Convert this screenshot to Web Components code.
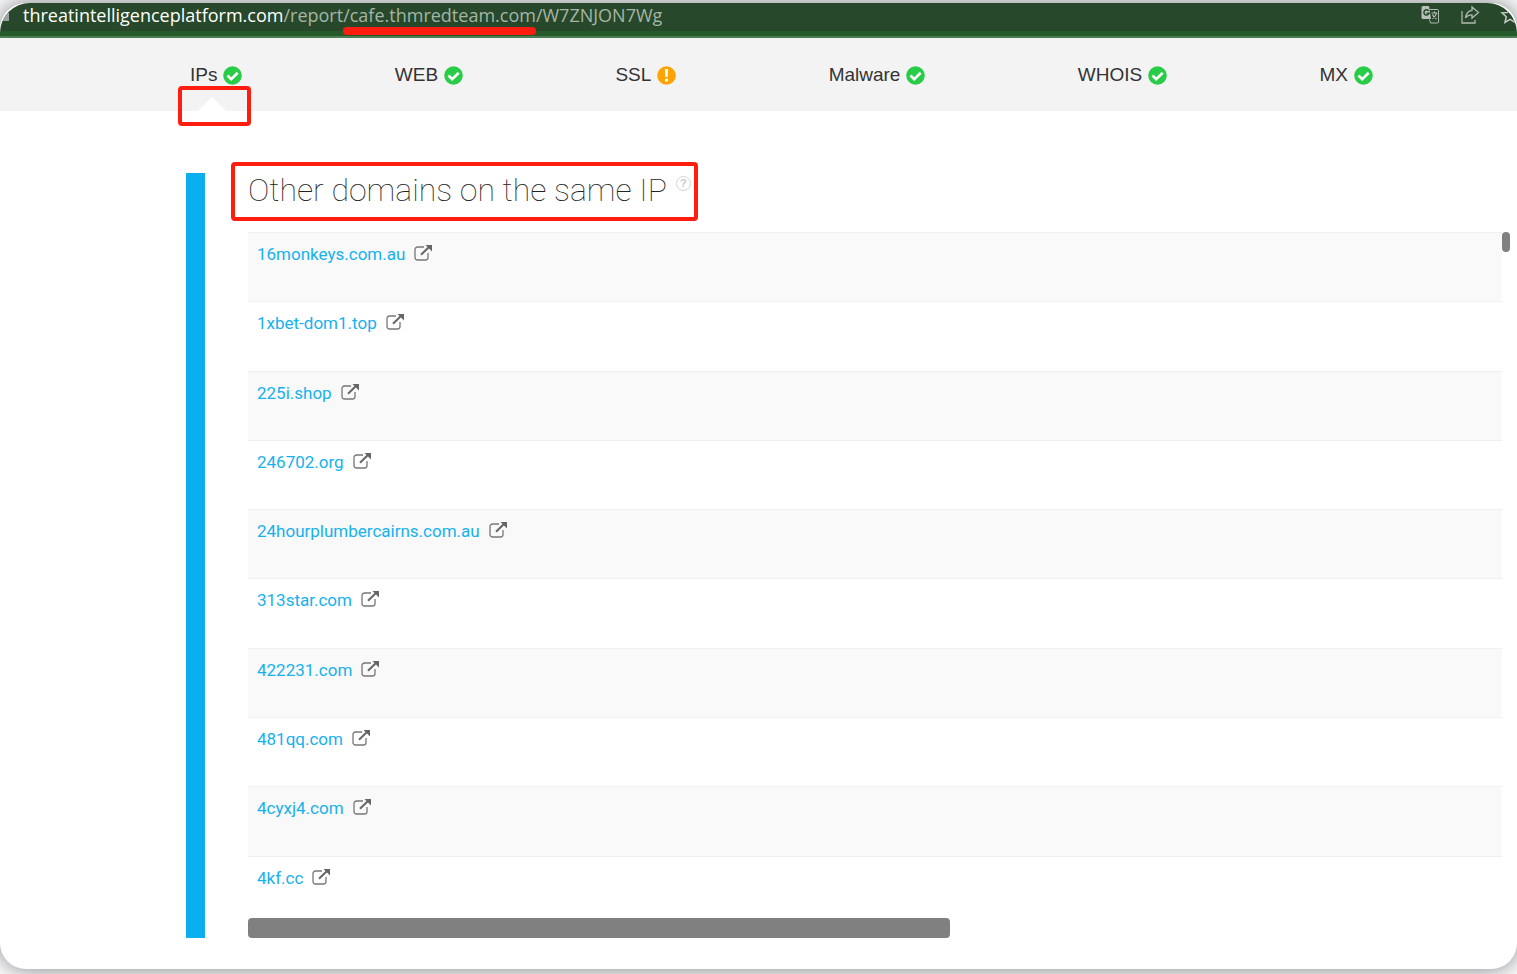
<!DOCTYPE html>
<html lang="en">
<head>
<meta charset="utf-8">
<meta name="viewport" content="width=device-width, initial-scale=1">
<title>Threat Intelligence Platform report</title>
<style>
html { background: #fff; }
body { margin: 0; font-family: "Liberation Sans", Arial, sans-serif; --mark: #ff1d10; overflow: hidden; }
</style>
</head>
<body>
<browser-card>
  <address-bar slot="bar"></address-bar>
  <report-tabs slot="tabs">
    <report-tab status="ok" active>IPs</report-tab>
    <report-tab status="ok">WEB</report-tab>
    <report-tab status="warn">SSL</report-tab>
    <report-tab status="ok">Malware</report-tab>
    <report-tab status="ok">WHOIS</report-tab>
    <report-tab status="ok">MX</report-tab>
  </report-tabs>
  <report-section>
    <section-title slot="title">Other domains on the same IP</section-title>
    <domain-list domains="16monkeys.com.au 1xbet-dom1.top 225i.shop 246702.org 24hourplumbercairns.com.au 313star.com 422231.com 481qq.com 4cyxj4.com 4kf.cc"></domain-list>
  </report-section>
</browser-card>

<script>
const define = (name, html, setup) => customElements.define(name, class extends HTMLElement {
  constructor() {
    super();
    const t = document.createElement('template');
    t.innerHTML = html;
    this.attachShadow({ mode: 'open' }).append(t.content.cloneNode(true));
  }
  connectedCallback() { if (setup) setup(this, this.shadowRoot); }
});

define('browser-card', `
<style>
:host { display: block; padding: 3px 0 5px; }
.card { background: #fff; border-radius: 26px; overflow: hidden; box-shadow: 0 0 24px #777b7d; }
</style>
<div class="card"><slot name="bar"></slot><slot name="tabs"></slot><main><slot></slot></main></div>`);

define('address-bar', `
<style>
:host { display: block; background: #27482a; border-bottom: 2px solid #4f7d53; border-radius: 30px 30px 0 0; overflow: hidden; }
.row { display: flex; align-items: center; height: 28px; padding-bottom: 5px; background: linear-gradient(#27482a 28px, #275a2a 28px); }
.lock { width: 9px; height: 8px; background: #9da3a5; flex: none; }
.url { flex: 1; margin-left: 14px; white-space: nowrap; font: 18px/24px "Open Sans", "Noto Sans", sans-serif; color: #a5b5a7; padding-bottom: 4px; }
b { font-weight: 400; color: #fff; }
.marked { position: relative; }
.marked::after { content: ""; position: absolute; left: 0; right: 0; bottom: -8px; height: 8px; border-radius: 4px; background: var(--mark); }
button { border: 0; padding: 0; margin: 0 0 4px 20px; width: 20px; height: 20px; background: none; flex: none; }
button:last-child { margin-right: -3px; }
svg { display: block; width: 20px; height: 20px; }
</style>
<div class="row">
  <span class="lock"></span>
  <div class="url"><b>threatintelligenceplatform.com</b>/report<span class="marked">/cafe.thmredteam.com</span>/W7ZNJON7Wg</div>
  <button type="button" aria-label="Translate"><svg viewBox="0 0 20 20"><path d="M2 1h7l2 13H3a1.500 1.500 0 0 1-1.500-1.500v-10A1.500 1.500 0 0 1 3 1z" fill="#b9c0ba"/><path d="M9.500 4.500h8a1 1 0 0 1 1 1V17a1 1 0 0 1-1 1H10.500L9.500 14.500" fill="none" stroke="#aeb8af"/><path d="M8.600 5.900A2.600 2.600 0 1 0 9 8.200H6.600" fill="none" stroke="#27482a" stroke-width="1.500"/><path d="M11.500 8h6M14.500 6.500V8M16.500 8c-.6 3-2.500 4.700-4 5.700M12.500 9.500c.8 2 2.300 3.500 4 4.500" fill="none" stroke="#b9c0ba" stroke-width="1.200"/></svg></button>
  <button type="button" aria-label="Share"><svg viewBox="0 0 20 20" fill="none" stroke="#aeb8af" stroke-width="1.300"><path d="M2 6v12h13v-3"/><path d="M12 2l6.500 5.500L12 13V9.800c-3 0-5 .9-6.500 3.200C6 8.500 8.500 5.800 12 5.300z"/></svg></button>
  <button type="button" aria-label="Bookmark"><svg viewBox="0 0 20 20" fill="none" stroke="#c4cac5" stroke-width="1.500"><path d="M10 2l2.300 5.400 5.700.5-4.300 3.800 1.300 5.700-5-3-5 3 1.300-5.700L2 7.900l5.700-.5z"/></svg></button>
</div>`);

define('report-tabs', `
<style>
:host { display: block; background: #f3f3f3; }
nav { display: flex; justify-content: space-between; padding: 0 144px 0 190px; }
</style>
<nav aria-label="Report sections"><slot></slot></nav>`);

define('report-tab', `
<style>
:host { display: block; position: relative; height: 73px; }
a { display: flex; align-items: center; gap: 6px; padding-top: 26px; font-size: 19px; line-height: 22px; color: #333; text-decoration: none; }
svg { width: 19px; height: 19px; display: block; }
.warn, :host([status="warn"]) .ok { display: none; }
:host([status="warn"]) .warn { display: block; }
.arrow, .mark { display: none; }
:host([active]) .arrow { display: block; position: absolute; left: 8px; bottom: 0; border: 14px solid transparent; border-top: 0; border-bottom-color: #fff; }
:host([active]) .mark { display: block; position: absolute; box-sizing: border-box; left: -12px; right: -9px; top: 48px; height: 40px; border: 4px solid var(--mark); border-radius: 4px; }
</style>
<a href="#"><span><slot></slot></span>
<svg class="ok" viewBox="0 0 19 19"><circle cx="9.500" cy="9.500" r="9.300" fill="#29cc47"/><path d="M4.500 9.500l3.700 3.600 6.500-6.400" fill="none" stroke="#fff" stroke-width="2.700"/></svg>
<svg class="warn" viewBox="0 0 19 19"><circle cx="9.500" cy="9.500" r="9.300" fill="#ffa305"/><path d="M7.900 3h3.200l-.4 8H8.300zM8 12.700h3v2.900H8z" fill="#fff"/></svg></a>
<span class="arrow"></span><span class="mark"></span>`);

define('report-section', `
<style>
:host { display: block; padding: 62px 7px 31px 186px; }
section { border-left: 19px solid #0baeee; padding-left: 43px; }
</style>
<section><slot name="title"></slot><slot></slot></section>`);

define('section-title', `
<style>
:host { display: block; height: 59px; }
.box { display: inline-flex; position: relative; gap: 9px; }
h2 { margin: 0; font: 100 32px/34px Roboto, sans-serif; color: #222; white-space: nowrap; }
button { width: 15px; height: 15px; margin-top: 3px; padding: 0; box-sizing: border-box; border: 1px solid #d4d4d4; border-radius: 50%; background: none; color: #c8c8c8; font: 700 11px/13px "Liberation Sans", sans-serif; }
.mark { position: absolute; left: -17px; right: -7px; top: -11px; bottom: -14px; border: 4px solid var(--mark); border-radius: 4px; box-sizing: border-box; pointer-events: none; }
</style>
<div class="box"><h2><slot></slot></h2><button type="button" aria-label="Help">?</button><span class="mark"></span></div>`);

define('domain-list', `
<style>
:host { display: grid; grid-template-columns: 1fr 8px; }
.view { height: 686px; overflow: hidden; }
table { width: 100%; height: 693px; border-collapse: separate; border-spacing: 0; }
td { padding: 11px 9px 0; vertical-align: top; border-top: 1px solid #f0f0f0; font: 17px/20px Roboto, sans-serif; }
tr:nth-child(odd) td { background: #f9f9f9; }
a { color: #16b1ee; text-decoration: none; }
a.out { display: inline-block; margin-left: 9px; vertical-align: top; }
svg { display: block; width: 18px; height: 18px; }
.v { height: 20px; border-radius: 4px; background: #808080; }
.h { width: 56%; height: 20px; border-radius: 4px; background: #808080; }
</style>
<div class="view"><table aria-label="Domains on the same IP"><tbody></tbody></table></div>
<div class="v"></div>
<div class="h"></div>`, (host, root) => {
  root.querySelector('tbody').innerHTML = host.getAttribute('domains').split(' ').map(d => `
<tr><td><a href="#">${d}</a><a class="out" href="#" aria-label="Open ${d}"><svg viewBox="0 0 18 18" fill="none" stroke="#777" stroke-width="1.300"><path d="M10 3H3.500A2.500 2.500 0 0 0 1 5.500v8A2.500 2.500 0 0 0 3.500 16h8a2.500 2.500 0 0 0 2.500-2.500V9"/><path d="M7 10.700L15 3" stroke="#666" stroke-width="2"/><path d="M11.500 1H18v6.500z" fill="#666" stroke="none"/></svg></a></td></tr>`).join('');
});
</script>
</body>
</html>
